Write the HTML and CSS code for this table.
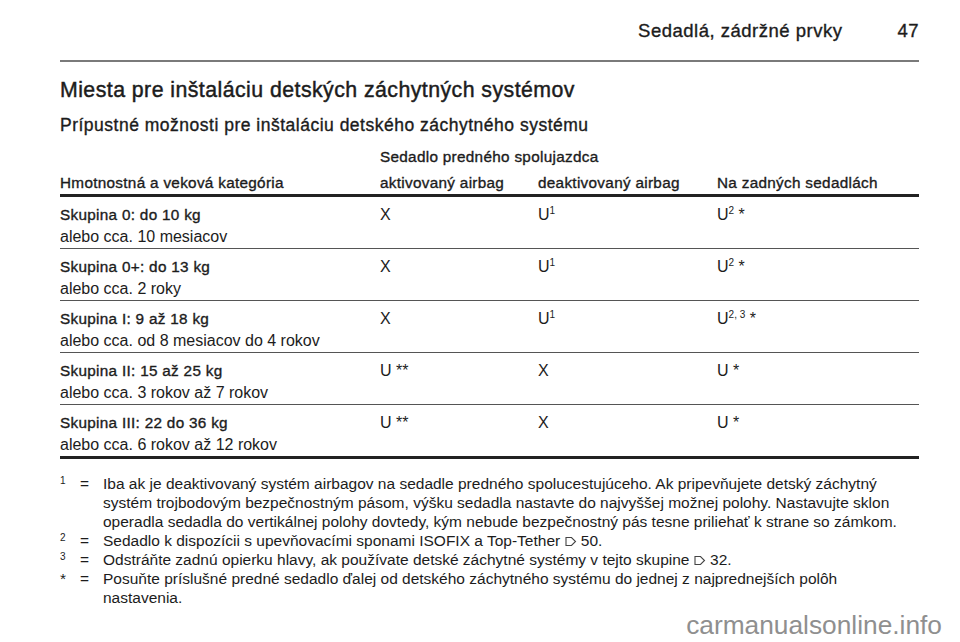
FILE: index.html
```html
<!DOCTYPE html>
<html lang="sk">
<head>
<meta charset="utf-8">
<title>Sedadlá, zádržné prvky</title>
<link rel="stylesheet" href="styles.css">
</head>
<body>
<div class="page">
  <header class="running">
    <span class="run-title">Sedadlá, zádržné prvky</span>
    <span class="run-num">47</span>
  </header>

  <h1 class="title">Miesta pre inštaláciu detských záchytných systémov</h1>
  <h2 class="subtitle">Prípustné možnosti pre inštaláciu detského záchytného systému</h2>

  <table class="seats">
    <colgroup>
      <col class="c1"><col class="c2"><col class="c3"><col class="c4">
    </colgroup>
    <thead>
      <tr class="h-top">
        <th></th>
        <th colspan="2">Sedadlo predného spolujazdca</th>
        <th></th>
      </tr>
      <tr class="h-main">
        <th>Hmotnostná a veková kategória</th>
        <th>aktivovaný airbag</th>
        <th>deaktivovaný airbag</th>
        <th>Na zadných sedadlách</th>
      </tr>
    </thead>
    <tbody>
      <tr>
        <td><div class="grp">Skupina 0: do 10 kg</div><div class="age">alebo cca. 10 mesiacov</div></td>
        <td>X</td>
        <td>U<sup>1</sup></td>
        <td>U<sup>2</sup> *</td>
      </tr>
      <tr>
        <td><div class="grp">Skupina 0+: do 13 kg</div><div class="age">alebo cca. 2 roky</div></td>
        <td>X</td>
        <td>U<sup>1</sup></td>
        <td>U<sup>2</sup> *</td>
      </tr>
      <tr>
        <td><div class="grp">Skupina I: 9 až 18 kg</div><div class="age">alebo cca. od 8 mesiacov do 4 rokov</div></td>
        <td>X</td>
        <td>U<sup>1</sup></td>
        <td>U<sup>2, 3</sup> *</td>
      </tr>
      <tr>
        <td><div class="grp">Skupina II: 15 až 25 kg</div><div class="age">alebo cca. 3 rokov až 7 rokov</div></td>
        <td>U **</td>
        <td>X</td>
        <td>U *</td>
      </tr>
      <tr class="last">
        <td><div class="grp">Skupina III: 22 do 36 kg</div><div class="age">alebo cca. 6 rokov až 12 rokov</div></td>
        <td>U **</td>
        <td>X</td>
        <td>U *</td>
      </tr>
    </tbody>
  </table>

  <dl class="notes">
    <dt class="mark sup">1</dt><dd class="eq">=</dd>
    <dd class="txt">Iba ak je deaktivovaný systém airbagov na sedadle predného spolucestujúceho. Ak pripevňujete detský záchytný systém trojbodovým bezpečnostným pásom, výšku sedadla nastavte do najvyššej možnej polohy. Nastavujte sklon operadla sedadla do vertikálnej polohy dovtedy, kým nebude bezpečnostný pás tesne priliehať k strane so zámkom.</dd>

    <dt class="mark sup">2</dt><dd class="eq">=</dd>
    <dd class="txt">Sedadlo k dispozícii s upevňovacími sponami ISOFIX a Top-Tether <svg class="ref" viewBox="0 0 12 11" width="12" height="11"><path d="M1 1.5 H6.5 L10.5 5.5 L6.5 9.5 H1 Z" fill="none" stroke="#444" stroke-width="1.1"/></svg> 50.</dd>

    <dt class="mark sup">3</dt><dd class="eq">=</dd>
    <dd class="txt">Odstráňte zadnú opierku hlavy, ak používate detské záchytné systémy v tejto skupine <svg class="ref" viewBox="0 0 12 11" width="12" height="11"><path d="M1 1.5 H6.5 L10.5 5.5 L6.5 9.5 H1 Z" fill="none" stroke="#444" stroke-width="1.1"/></svg> 32.</dd>

    <dt class="mark">*</dt><dd class="eq">=</dd>
    <dd class="txt">Posuňte príslušné predné sedadlo ďalej od detského záchytného systému do jednej z najprednejších polôh nastavenia.</dd>
  </dl>

  <div class="watermark">carmanualsonline.info</div>
</div>
</body>
</html>
```

FILE: styles.css
```css
html, body {
  margin: 0;
  padding: 0;
  background: #ffffff;
}

body {
  font-family: "Liberation Sans", Arial, Helvetica, sans-serif;
  color: #1c1c1c;
}

.page {
  position: relative;
  width: 960px;
  height: 642px;
  box-sizing: border-box;
  padding: 0 41px 0 60px;
  overflow: hidden;
}

/* medium-weight headings: regular face, slightly emboldened */
.running,
.title,
.subtitle,
.seats th,
.grp {
  font-weight: normal;
  -webkit-text-stroke: 0.35px currentColor;
}

/* running header */
.running {
  display: flex;
  justify-content: flex-end;
  align-items: baseline;
  gap: 55px;
  padding: 20px 0 18px;
  border-bottom: 2px solid #7a7a7a;
  font-size: 18.5px;
  line-height: 22px;
  letter-spacing: 0.5px;
}

.title {
  margin: 16px 0 0;
  font-size: 21.3px;
  line-height: 24px;
  letter-spacing: 0.45px;
  -webkit-text-stroke: 0.45px currentColor;
}

.subtitle {
  margin: 12px 0 0;
  font-size: 17.5px;
  line-height: 22px;
  letter-spacing: 0.5px;
}

/* table */
.seats {
  margin-top: 10px;
  width: 859px;
  table-layout: fixed;
  border-collapse: separate;
  border-spacing: 0;
  font-size: 16px;
}

.c1 { width: 320px; }
.c2 { width: 158px; }
.c3 { width: 179px; }
.c4 { width: 202px; }

.seats th {
  text-align: left;
  font-size: 15.3px;
  line-height: 22px;
  letter-spacing: 0.3px;
  padding: 0;
  vertical-align: bottom;
  white-space: nowrap;
}

.h-top th {
  padding-bottom: 4px;
}

.h-main th {
  border-bottom: 3px solid #222;
}

.seats td {
  vertical-align: top;
  padding: 7px 0 0;
  line-height: 22px;
  height: 44px;
  border-bottom: 1px solid #555;
}

.seats tr.last td {
  border-bottom: 3px solid #222;
}

.grp {
  font-size: 15.3px;
  letter-spacing: 0.3px;
}

.age {
  font-size: 16px;
}

sup {
  font-size: 10px;
  line-height: 0;
  vertical-align: 6px;
}

/* footnotes */
.notes {
  display: grid;
  grid-template-columns: 20px 23px 1fr;
  margin: 15px 0 0;
  font-size: 15.5px;
  line-height: 19px;
}

.notes dt,
.notes dd {
  margin: 0;
}

.mark {
  font-size: 15.5px;
}

.mark.sup {
  font-size: 10px;
  line-height: 14px;
}

.ref {
  vertical-align: -1px;
}

.watermark {
  position: absolute;
  right: 18px;
  top: 612px;
  font-size: 26.3px;
  line-height: 26px;
  color: #8f8f8f;
  white-space: nowrap;
}
```
